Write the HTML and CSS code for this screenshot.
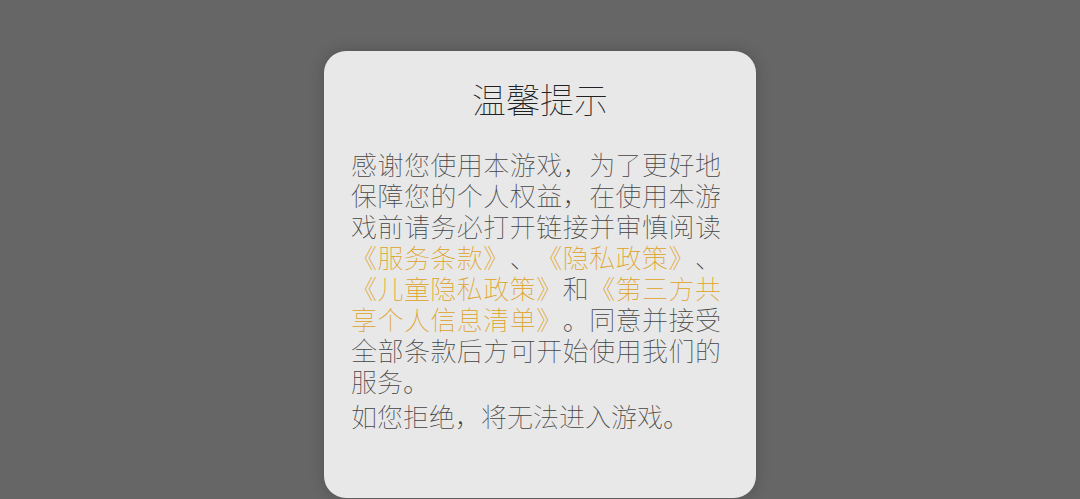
FILE: index.html
```html
<!DOCTYPE html>
<html lang="zh-CN">
<head>
<meta charset="utf-8">
<meta name="viewport" content="width=device-width, initial-scale=1">
<title>温馨提示</title>
<link rel="stylesheet" href="styles.css">
</head>
<body class="backdrop">
<main class="dialog" role="dialog" aria-labelledby="dialog-title">
<h1 class="dialog-title" id="dialog-title">温馨提示</h1>
<p class="dialog-text">感谢您使用本游戏，为了更好地保障您的个人权益，在使用本游戏前请务必打开链接并审慎阅读<a class="dialog-link" href="#terms">《服务条款》</a>、<a class="dialog-link" href="#privacy">《隐私政策》</a>、<a class="dialog-link" href="#children">《儿童隐私政策》</a>和<a class="dialog-link" href="#third-party">《第三方共享个人信息清单》</a>。同意并接受全部条款后方可开始使用我们的服务。</p>
<p class="dialog-text">如您拒绝，将无法进入游戏。</p>
</main>
</body>
</html>
```
FILE: styles.css
```css
* {
  box-sizing: border-box;
}

.backdrop {
  display: flex;
  justify-content: center;
  align-items: flex-start;
  margin: 0;
  padding-top: 51px;
  min-height: 100vh;
  background: #666;
  font-family: "Liberation Sans", "Noto Sans CJK SC", sans-serif;
  font-weight: 100;
}

.dialog {
  width: 40%;
  min-width: 432px;
  padding: 24px 35px 64px 27px;
  border-radius: 22px;
  background: #e8e8e8;
  box-shadow: 0 0 16px rgba(0, 0, 0, 0.2);
}

.dialog-title {
  margin: 0 -4px 24px 4px;
  color: #222;
  font-size: 34px;
  font-weight: 100;
  line-height: 52px;
  text-align: center;
}

.dialog-text {
  margin: 0 0 4px;
  color: #444;
  font-size: 26px;
  line-height: 31px;
  text-align: justify;
  text-spacing-trim: space-all;
}

.dialog-text:last-child {
  margin-bottom: 0;
}

.dialog-link {
  color: #dda021;
  text-decoration: none;
}
```
